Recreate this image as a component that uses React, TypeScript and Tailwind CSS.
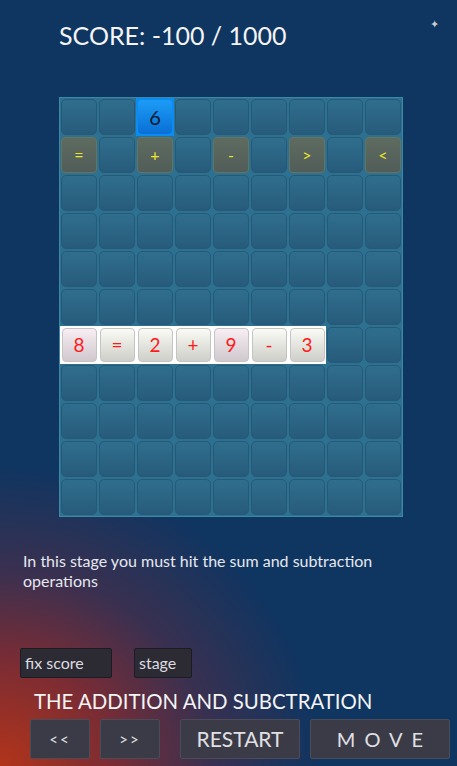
const COLS = 9
const ROWS = 11

type Cell = { kind: "empty" | "active" | "op" | "eq"; label?: string }

const buildBoard = (): Cell[][] => {
    const board: Cell[][] = []
    for (let r = 0; r < ROWS; r++) {
        const row: Cell[] = []
        for (let c = 0; c < COLS; c++) row.push({ kind: "empty" })
        board.push(row)
    }
    board[0][2] = { kind: "active", label: "6" }
    const ops: [number, string][] = [[0, "="], [2, "+"], [4, "-"], [6, ">"], [8, "<"]]
    ops.forEach(([c, l]) => (board[1][c] = { kind: "op", label: l }))
    "8=2+9-3".split("").forEach((l, c) => (board[6][c] = { kind: "eq", label: l }))
    return board
}

const Tile = ({ cell, pink }: { cell: Cell; pink?: boolean }) => {
    if (cell.kind === "active") {
        return (
            <div className="w-[38px] h-[38px] bg-[#0a8df2] flex items-center justify-center">
                <div className="w-[34px] h-[34px] rounded-[4px] bg-gradient-to-b from-[#1d9cf6] to-[#0a6fd6] flex items-center justify-center text-[20px] text-[#0b1a2a]">
                    {cell.label}
                </div>
            </div>
        )
    }
    if (cell.kind === "eq") {
        return (
            <div className="w-[38px] h-[38px] bg-white flex items-center justify-center">
                <div className={`w-[35px] h-[34px] rounded-[4px] border border-[#c4c4c4] bg-gradient-to-b ${pink ? "from-[#f8eef4] to-[#cfc8cc]" : "from-[#fbfbf6] to-[#cdcfc8]"} flex items-center justify-center text-[19px] text-[#ff1a1a]`}>
                    {cell.label}
                </div>
            </div>
        )
    }
    if (cell.kind === "op") {
        return (
            <div className="w-[38px] h-[38px] flex items-center justify-center">
                <div className="w-[36px] h-[36px] rounded-[4px] border border-[#66745f] bg-gradient-to-b from-[#5e6b60] to-[#515d58] flex items-center justify-center text-[16px] text-[#f0e62a]">
                    {cell.label}
                </div>
            </div>
        )
    }
    return (
        <div className="w-[38px] h-[38px] flex items-center justify-center">
            <div className="w-[36px] h-[36px] rounded-[5px] border border-[#245a78] bg-gradient-to-b from-[#306e8d] to-[#275b7c]" />
        </div>
    )
}

const App = () => {
    const board = buildBoard()
    return (
        <div className="relative w-[457px] h-[766px] overflow-hidden bg-[#0f3561] bg-[radial-gradient(ellipse_320px_300px_at_0%_100%,#b2341a_0%,#7a2c34_35%,#3a3050_65%,#0f3561_100%)] font-['Lato',sans-serif] text-white">
            <div className="absolute top-[16px] left-[430px] text-[11px] text-[#c9cbd2]">✦</div>

            <div className="pt-[19px] pl-[59px] text-[25px] leading-[32px] text-[#f4f4f4]">SCORE: -100 / 1000</div>

            <div className="mt-[46px] ml-[59px] w-[344px] border border-[#3e86a6] bg-[#2d7090]">
                {board.map((row, r) => (
                    <div key={r} className="flex">
                        {row.map((cell, c) => (
                            <Tile key={c} cell={cell} pink={c === 0 || c === 4} />
                        ))}
                    </div>
                ))}
            </div>

            <p className="mt-[34px] ml-[23px] w-[400px] text-[16px] leading-[20px] text-[#e6e8ee]">
                In this stage you must hit the sum and subtraction operations
            </p>

            <div className="mt-[57px] ml-[20px] flex gap-[22px]">
                <div className="w-[92px] h-[30px] rounded-[2px] border border-[#1c1c24] bg-[#2c2b33] px-[4px] text-[16px] leading-[28px] text-[#dcdce0]">fix score</div>
                <div className="w-[58px] h-[30px] rounded-[2px] border border-[#1c1c24] bg-[#2c2b33] px-[4px] text-[16px] leading-[28px] text-[#dcdce0]">stage</div>
            </div>

            <div className="mt-[10px] ml-[34px] text-[20.4px] leading-[26px] text-[#f4f4f4]">THE ADDITION AND SUBCTRATION</div>

            <div className="mt-[5px] ml-[30px] flex text-[#e0e0e4]">
                <button className="w-[60px] h-[40px] rounded-[2px] border border-[#4c4c58] bg-[#3b3b48] text-[15px] tracking-[2px]">&lt;&lt;</button>
                <button className="ml-[10px] w-[60px] h-[40px] rounded-[2px] border border-[#4c4c58] bg-[#3b3b48] text-[15px] tracking-[2px]">&gt;&gt;</button>
                <button className="ml-[20px] w-[120px] h-[40px] rounded-[2px] border border-[#4c4c58] bg-[#3b3b48] text-[21px]">RESTART</button>
                <button className="ml-[10px] w-[140px] h-[40px] rounded-[2px] border border-[#4c4c58] bg-[#3b3b48] text-[20px] tracking-[9px] pl-[9px]">MOVE</button>
            </div>
        </div>
    )
}

export default App
